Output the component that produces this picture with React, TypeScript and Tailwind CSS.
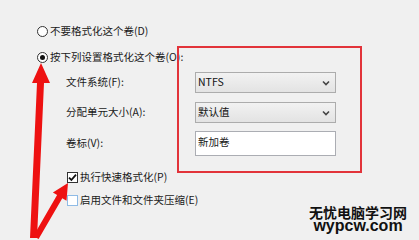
import React from "react";

const FONT = { fontFamily: '"Noto Sans CJK SC", "Noto Sans", sans-serif' };

function Radio({ checked }: { checked?: boolean }) {
  return (
    <span className="flex h-[11px] w-[11px] items-center justify-center rounded-full border border-[#333] bg-white">
      {checked && <span className="h-[5px] w-[5px] rounded-full bg-[#111]" />}
    </span>
  );
}

function Checkbox({ checked }: { checked?: boolean }) {
  return (
    <span
      className={
        checked
          ? "flex h-[11px] w-[11px] items-center justify-center border border-[#333] bg-white"
          : "flex h-[11px] w-[11px] items-center justify-center border border-[#8fbbe6] bg-white"
      }
    >
      {checked && (
        <svg width="9" height="9" viewBox="0 0 9 9">
          <path d="M1 4.6 L3.4 7 L8 1.6" fill="none" stroke="#111" strokeWidth="1.8" />
        </svg>
      )}
    </span>
  );
}

function Select({ value }: { value: string }) {
  return (
    <div className="flex h-[21px] w-[141px] items-center justify-between border border-[#acacac] bg-gradient-to-b from-[#f2f2f2] to-[#e3e3e3] pl-[2px] pr-[5px]">
      <span className="text-[10.5px] leading-none text-[#111]">{value}</span>
      <svg width="8" height="6" viewBox="0 0 8 6">
        <path d="M1 1.5 L4 4.5 L7 1.5" fill="none" stroke="#444" strokeWidth="1.6" />
      </svg>
    </div>
  );
}

export default function App() {
  return (
    <div className="relative h-[240px] w-[419px] overflow-hidden bg-[#f0f0f0] text-[#1a1a1a]" style={FONT}>
      <div className="flex flex-col pl-[37px] pt-[21px] text-[10.5px] leading-none">
        <div className="flex h-[20px] items-center gap-[2px]">
          <Radio />
          <span>不要格式化这个卷(D)</span>
        </div>
        <div className="mt-[6px] flex h-[20px] items-center gap-[2px]">
          <Radio checked />
          <span>按下列设置格式化这个卷(O):</span>
        </div>

        <div className="ml-[29px] mt-[5px] grid grid-cols-[129px_141px] items-center gap-y-[9px]">
          <span>文件系统(F):</span>
          <Select value="NTFS" />
          <span>分配单元大小(A):</span>
          <Select value="默认值" />
          <span className="-mt-[1px]">卷标(V):</span>
          <div className="-mt-[1px] flex h-[25px] w-[141px] items-start border border-[#abadb3] bg-white pl-[2px] pt-[5px]">
            新加卷
          </div>
        </div>

        <div className="ml-[30px] mt-[11px] flex h-[20px] items-center gap-[2px]">
          <Checkbox checked />
          <span>执行快速格式化(P)</span>
        </div>
        <div className="ml-[30px] mt-[3px] flex h-[20px] items-center gap-[2px]">
          <Checkbox />
          <span>启用文件和文件夹压缩(E)</span>
        </div>
      </div>

      {/* annotation: red frame round the settings */}
      <div className="absolute left-[177px] top-[46px] h-[127px] w-[185px] border-2 border-[#e2333a]" />

      {/* annotation: arrows */}
      <svg className="pointer-events-none absolute inset-0" width="419" height="240" viewBox="0 0 419 240">
        <polygon points="41,63 50,83 44,83 37,238 30,238 37,83 32,83" fill="#ee1111" />
        <polygon points="68,183 66.5,200.8 62.3,198.2 38.6,239 33.4,236 57.1,195.1 52.9,192.6" fill="#ee1111" />
      </svg>

      {/* watermark */}
      <div className="absolute left-[306px] top-[205px] flex w-[104px] flex-col items-center font-bold leading-none text-[#111]">
        <span className="text-[14px]">无忧电脑学习网</span>
        <span className="text-[16px] leading-[14px]" style={{ fontFamily: '"Liberation Sans", sans-serif' }}>
          wypcw.com
        </span>
      </div>
    </div>
  );
}
